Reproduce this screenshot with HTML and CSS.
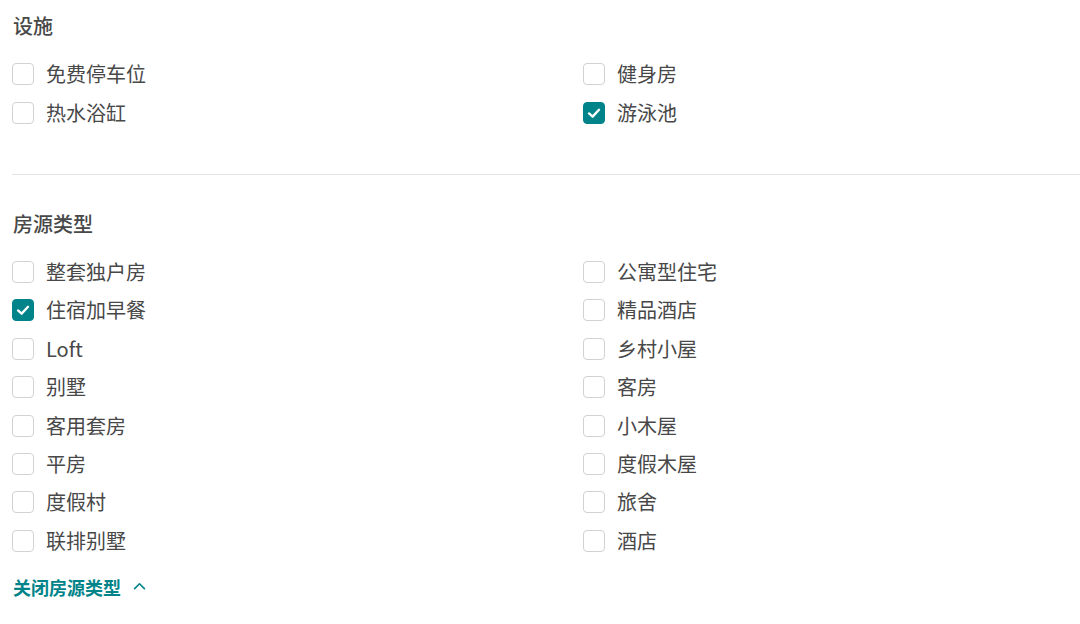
FILE: index.html
```html
<!DOCTYPE html>
<html lang="zh-CN">
<head>
<meta charset="utf-8">
<link rel="stylesheet" href="styles.css">
</head>
<body>
<div class="page">
  <section class="section first">
    <h2 class="title">设施</h2>
    <div class="grid">
      <label class="item"><span class="box"></span><span class="label">免费停车位</span></label>
      <label class="item"><span class="box"></span><span class="label">健身房</span></label>
      <label class="item"><span class="box"></span><span class="label">热水浴缸</span></label>
      <label class="item"><span class="box checked"><svg viewBox="0 0 22 22" width="22" height="22"><polyline points="5.5,11.5 9.5,15 16.5,7.5" fill="none" stroke="#fff" stroke-width="2.6" stroke-linecap="round" stroke-linejoin="round"/></svg></span><span class="label">游泳池</span></label>
    </div>
  </section>
  <hr class="divider">
  <section class="section second">
    <h2 class="title">房源类型</h2>
    <div class="grid">
      <label class="item"><span class="box"></span><span class="label">整套独户房</span></label>
      <label class="item"><span class="box"></span><span class="label">公寓型住宅</span></label>
      <label class="item"><span class="box checked"><svg viewBox="0 0 22 22" width="22" height="22"><polyline points="5.5,11.5 9.5,15 16.5,7.5" fill="none" stroke="#fff" stroke-width="2.6" stroke-linecap="round" stroke-linejoin="round"/></svg></span><span class="label">住宿加早餐</span></label>
      <label class="item"><span class="box"></span><span class="label">精品酒店</span></label>
      <label class="item"><span class="box"></span><span class="label">Loft</span></label>
      <label class="item"><span class="box"></span><span class="label">乡村小屋</span></label>
      <label class="item"><span class="box"></span><span class="label">别墅</span></label>
      <label class="item"><span class="box"></span><span class="label">客房</span></label>
      <label class="item"><span class="box"></span><span class="label">客用套房</span></label>
      <label class="item"><span class="box"></span><span class="label">小木屋</span></label>
      <label class="item"><span class="box"></span><span class="label">平房</span></label>
      <label class="item"><span class="box"></span><span class="label">度假木屋</span></label>
      <label class="item"><span class="box"></span><span class="label">度假村</span></label>
      <label class="item"><span class="box"></span><span class="label">旅舍</span></label>
      <label class="item"><span class="box"></span><span class="label">联排别墅</span></label>
      <label class="item"><span class="box"></span><span class="label">酒店</span></label>
    </div>
    <a class="toggle" href="#">关闭房源类型<svg class="chev" viewBox="0 0 12 12" width="13" height="13"><polyline points="1.5,8 6,3.5 10.5,8" fill="none" stroke="#008489" stroke-width="1.5" stroke-linecap="round" stroke-linejoin="round"/></svg></a>
  </section>
</div>
</body>
</html>
```

FILE: styles.css
```css
html, body {
  margin: 0;
  padding: 0;
  background: #fff;
}
body {
  font-family: "Noto Sans CJK SC", "Noto Sans", sans-serif;
  color: #484848;
  overflow: hidden;
}
.page {
  padding: 0 0 0 12px;
}
.title {
  margin: 14px 0 17px 1px;
  font-size: 20px;
  line-height: 24px;
  font-weight: 500;
  color: #484848;
}
.second .title {
  margin-top: 37px;
}
.grid {
  display: grid;
  grid-template-columns: 571px 1fr;
}
.item {
  display: flex;
  align-items: center;
  height: 38.4px;
  cursor: pointer;
}
.box {
  box-sizing: border-box;
  width: 22px;
  height: 22px;
  border: 1px solid #d2d2d2;
  border-radius: 4px;
  background: #fff;
  flex: none;
  display: flex;
  align-items: center;
  justify-content: center;
}
.box.checked {
  background: #008489;
  border-color: #008489;
}
.box svg {
  display: block;
}
.label {
  margin-left: 12px;
  font-size: 20px;
  line-height: 24px;
  color: #484848;
}
.divider {
  border: 0;
  border-top: 1px solid #e4e4e4;
  margin: 42px 0 0 0;
  height: 0;
}
.toggle {
  display: inline-flex;
  align-items: center;
  margin-top: 15px;
  margin-left: 1px;
  font-size: 18px;
  line-height: 24px;
  font-weight: 700;
  color: #008489;
  text-decoration: none;
}
.chev {
  margin-left: 12px;
}
```
